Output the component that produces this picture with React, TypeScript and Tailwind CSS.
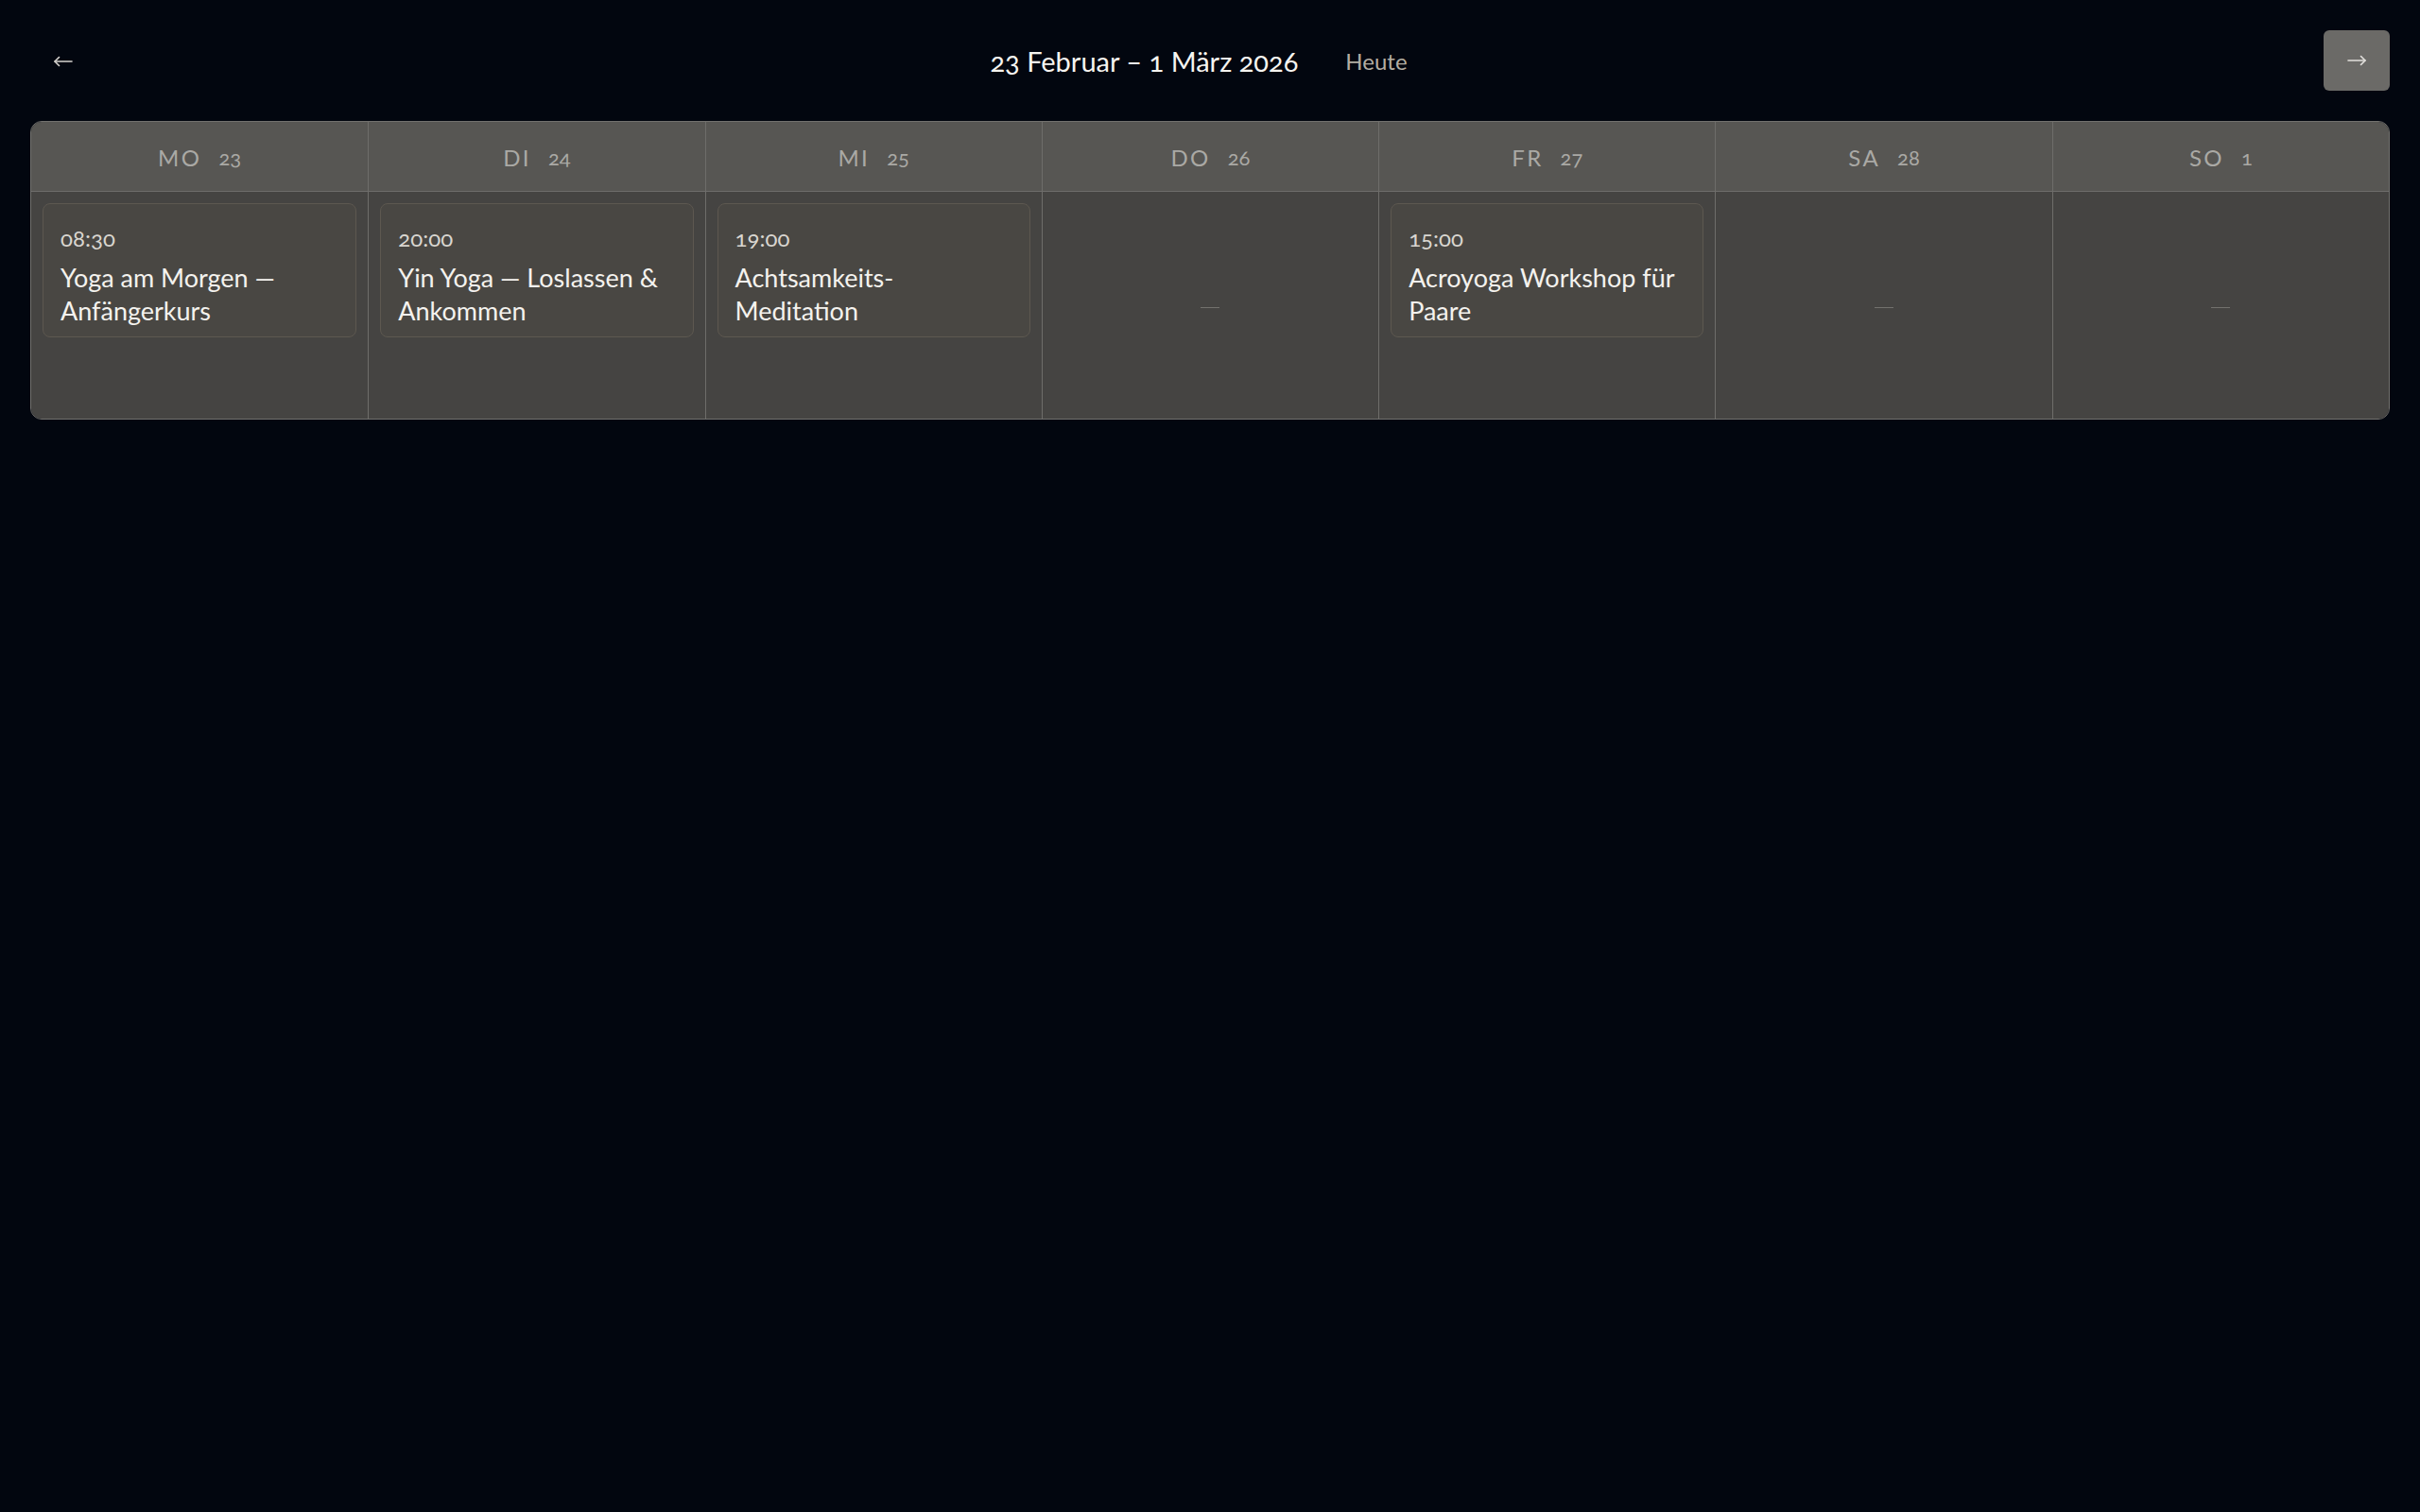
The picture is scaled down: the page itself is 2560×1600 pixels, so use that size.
import React from "react";

type CalEvent = { time: string; title: string };

interface DayColumn {
  label: string;
  date: number;
  events: CalEvent[];
}

const days: DayColumn[] = [
  { label: "MO", date: 23, events: [{ time: "08:30", title: "Yoga am Morgen — Anfängerkurs" }] },
  { label: "DI", date: 24, events: [{ time: "20:00", title: "Yin Yoga — Loslassen & Ankommen" }] },
  { label: "MI", date: 25, events: [{ time: "19:00", title: "Achtsamkeits-Meditation" }] },
  { label: "DO", date: 26, events: [] },
  { label: "FR", date: 27, events: [{ time: "15:00", title: "Acroyoga Workshop für Paare" }] },
  { label: "SA", date: 28, events: [] },
  { label: "SO", date: 1, events: [] },
];

const Arrow: React.FC<{ dir: "left" | "right" }> = ({ dir }) => (
  <svg
    viewBox="0 0 20 12"
    fill="none"
    stroke="currentColor"
    strokeWidth="1.6"
    strokeLinecap="round"
    strokeLinejoin="round"
    className="h-3 w-5"
  >
    {dir === "left" ? (
      <>
        <path d="M1 6h18" />
        <path d="M5.5 1.5 1 6l4.5 4.5" />
      </>
    ) : (
      <>
        <path d="M1 6h18" />
        <path d="M14.5 1.5 19 6l-4.5 4.5" />
      </>
    )}
  </svg>
);

const EventCard: React.FC<{ event: CalEvent }> = ({ event }) => (
  <div className="rounded-lg border border-[#5d5850] bg-[#494743] px-[18px] pt-[21px] pb-[10px]">
    <p className="text-[24px] leading-[30px] text-[#d9d6d0] [font-variant-numeric:oldstyle-nums]">
      {event.time}
    </p>
    <p className="mt-[9px] text-[27px] leading-[35px] text-[#f4f2ee]">{event.title}</p>
  </div>
);

export default function App() {
  return (
    <div className="min-h-screen bg-[#02060f] p-8 font-['Lato','Noto_Sans',sans-serif]">
      <header className="flex h-16 items-center justify-between">
        <button className="flex h-16 w-[70px] items-center justify-center rounded-md pt-[2px] text-[#d6d3cf]">
          <Arrow dir="left" />
        </button>

        <div className="flex items-center gap-[50px] pt-[2px] pr-6">
          <h1 className="text-[29px] text-[#f6f4f0] [font-variant-numeric:oldstyle-nums]">
            23 Februar – 1 März 2026
          </h1>
          <button className="text-[24px] text-[#b3ada2]">Heute</button>
        </div>

        <button className="flex h-16 w-[70px] items-center justify-center rounded-md bg-[#6b6a67] text-[#e2e0dc]">
          <Arrow dir="right" />
        </button>
      </header>

      <div className="mt-8 grid grid-cols-7 overflow-hidden rounded-xl border border-[#72716e]">
        {days.map((day, i) => (
          <div
            key={day.label}
            className={`flex flex-col ${i > 0 ? "border-l border-[#6e6d6a]" : ""}`}
          >
            <div className="flex h-[74px] items-center justify-center gap-[18px] border-b border-[#6e6d6a] bg-[#575653] pt-[2px] text-[#aaa9a5]">
              <span className="text-[24px] tracking-[0.1em]">{day.label}</span>
              <span className="text-[22px] [font-variant-numeric:oldstyle-nums]">{day.date}</span>
            </div>
            <div className="flex min-h-[240px] flex-1 flex-col gap-3 bg-[#454442] p-3">
              {day.events.length > 0 ? (
                day.events.map((ev) => <EventCard key={ev.time} event={ev} />)
              ) : (
                <div className="flex flex-1 items-center justify-center pt-1">
                  <span className="h-px w-5 bg-[#72716d]" />
                </div>
              )}
            </div>
          </div>
        ))}
      </div>
    </div>
  );
}
